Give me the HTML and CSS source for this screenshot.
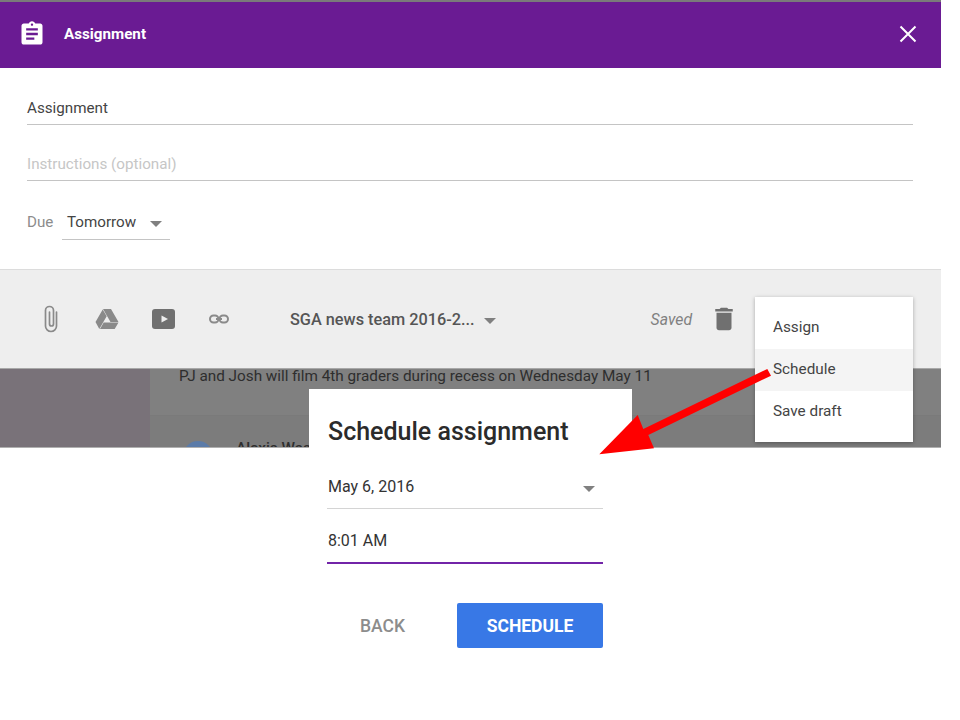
FILE: index.html
```html
<!DOCTYPE html>
<html lang="en">
  <head>
    <meta charset="UTF-8" />
    <title>Assignment</title>
    <link rel="stylesheet" href="styles.css">
  </head>
  <body>
    <div class="page">
      <div class="top-strip"></div>
      <header class="title-bar">
        <svg class="title-icon" viewBox="0 0 24 24" width="28" height="28">
          <path fill="#fff" d="M19 3h-4.180C14.400 1.840 13.300 1 12 1s-2.400.84-2.820 2H5c-1.100 0-2 .9-2 2v14c0 1.100.9 2 2 2h14c1.100 0 2-.9 2-2V5c0-1.100-.9-2-2-2zm-7 0c.55 0 1 .45 1 1s-.45 1-1 1-1-.45-1-1 .45-1 1-1zm2 14H7v-2h7v2zm3-4H7v-2h10v2zm0-4H7V7h10v2z"/>
        </svg>
        <span class="title-text">Assignment</span>
        <svg class="close-icon" viewBox="0 0 18 18" width="18" height="18">
          <path d="M1.500 1.500l15 15M16.500 1.500l-15 15" stroke="#fff" stroke-width="2"/>
        </svg>
      </header>

      <section class="form">
        <div class="field field-title">Assignment</div>
        <div class="field field-hint">Instructions (optional)</div>
        <div class="due-row">
          <span class="due-label">Due</span>
          <div class="due-select">
            <span>Tomorrow</span>
            <span class="caret"></span>
          </div>
        </div>
      </section>

      <section class="toolbar">
        <div class="attach-icons">
          <svg class="clip-icon" viewBox="0 0 32 32" width="32" height="32">
            <path fill="none" stroke="#8a8a8a" stroke-width="1.700" stroke-linecap="round" d="M21.500 9V23a5.500 5.500 0 0 1-11 0V7.500a4 4 0 0 1 8 0V21a2 2 0 0 1-4 0V9"/>
          </svg>
          <svg viewBox="0 0 24 24" width="24" height="24">
            <path fill="#8a8a8a" d="M8 2h8l7.500 13h-8zM7.700 2.600l4 6.600-7.400 12.800-3.800-7zM8.700 15.600h14.800l-3.800 6.400H5z"/>
          </svg>
          <svg viewBox="0 0 24 24" width="24" height="24">
            <rect x="1" y="2" width="23" height="20" rx="3" fill="#707070"/>
            <path fill="#eeeeee" d="M10.500 8.500v7l6.500-3.500z"/>
          </svg>
          <svg viewBox="0 0 24 24" width="24" height="24">
            <g fill="none" stroke="#8a8a8a" stroke-width="2">
              <rect x="3" y="8.500" width="8.500" height="7" rx="3.500"/>
              <rect x="12.500" y="8.500" width="8.500" height="7" rx="3.500"/>
              <path d="M9 12h6"/>
            </g>
          </svg>
        </div>
        <div class="class-select">
          <span>SGA news team 2016-2...</span>
          <span class="caret"></span>
        </div>
        <span class="saved">Saved</span>
        <svg class="trash" viewBox="0 0 24 24" width="30" height="30">
          <path fill="#707070" d="M6 19c0 1.100.9 2 2 2h8c1.100 0 2-.9 2-2V7H6v12zM19 4h-3.500l-1-1h-5l-1 1H5v2h14V4z"/>
        </svg>
      </section>

      <section class="backdrop">
        <div class="sidebar"></div>
        <div class="stream">
          <div class="post-text">PJ and Josh will film 4th graders during recess on Wednesday May 11</div>
          <div class="comment">
            <span class="avatar"></span>
            <span class="comment-name">Alexis Was</span>
          </div>
        </div>
      </section>

      <ul class="menu">
        <li>Assign</li>
        <li class="active">Schedule</li>
        <li>Save draft</li>
      </ul>

      <div class="dialog">
        <h2 class="dialog-title">Schedule assignment</h2>
        <div class="dialog-field date-field">
          <span>May 6, 2016</span>
          <span class="caret"></span>
        </div>
        <div class="dialog-field time-field">8:01 AM</div>
        <div class="dialog-actions">
          <button class="btn-back">BACK</button>
          <button class="btn-schedule">SCHEDULE</button>
        </div>
      </div>

      <svg class="pointer" viewBox="0 0 960 720" width="960" height="720">
        <path fill="#ff0000" d="M767.300 369L771 375.700L648.300 435L654 448.300L599.300 454.300L637.700 415L643.300 429z"/>
      </svg>
    </div>
  </body>
</html>
```

FILE: styles.css
```css
* {
    box-sizing: border-box;
}

html, body {
    margin: 0;
    padding: 0;
    height: 100%;
    background-color: #fff;
    overflow: hidden;
}

body {
    font-family: Roboto, "Liberation Sans", sans-serif;
    color: #3c3c3c;
}

.page {
    position: relative;
    width: 941px;
    height: 720px;
}

.top-strip {
    height: 2px;
    background-color: #7a7a7a;
}

.title-bar {
    display: flex;
    align-items: center;
    height: 66px;
    padding: 0 24px 2px 18px;
    background-color: #6a1b93;
    color: #fff;
}

.title-text {
    margin-left: 18px;
    font-size: 15.200px;
    font-weight: 700;
}

.close-icon {
    margin-left: auto;
}

.form {
    height: 201px;
    padding: 28px 28px 0 27px;
    font-size: 15.200px;
}

.field {
    height: 29px;
    border-bottom: 1px solid #c4c4c4;
    line-height: 25px;
}

.field-title {
    margin-bottom: 27px;
    color: #444;
}

.field-hint {
    color: #c6c6c6;
}

.due-row {
    display: flex;
    align-items: flex-start;
    margin-top: 29px;
    color: #8c8c8c;
}

.due-label {
    width: 35px;
    line-height: 24px;
}

.due-select {
    display: flex;
    align-items: center;
    justify-content: space-between;
    width: 108px;
    height: 30px;
    padding: 0 8px 6px 5px;
    border-bottom: 1px solid #c4c4c4;
    color: #444;
}

.caret {
    width: 0;
    height: 0;
    margin-top: 4px;
    border-left: 6.500px solid transparent;
    border-right: 6.500px solid transparent;
    border-top: 6px solid #808080;
}

.toolbar {
    display: flex;
    align-items: center;
    height: 100px;
    padding: 0 0 0 35px;
    background-color: #eeeeee;
    border-top: 1px solid #dcdcdc;
    border-bottom: 1px solid #a8a8a8;
}

.attach-icons {
    display: flex;
    align-items: center;
    gap: 32px;
}

.clip-icon {
    margin-right: -4px;
}

.class-select {
    display: flex;
    align-items: center;
    gap: 9px;
    margin-left: 59px;
    font-size: 16.300px;
    font-weight: 500;
    color: #555;
}

.saved {
    margin-left: 155px;
    font-size: 15.800px;
    font-style: italic;
    color: #808080;
}

.trash {
    margin-left: 17px;
}

.backdrop {
    display: flex;
    height: 79px;
    background-color: #808080;
    border-bottom: 1px solid #b0b0b0;
    overflow: hidden;
}

.sidebar {
    width: 150px;
    background-color: #797279;
}

.stream {
    flex: 1;
    color: #2e2e2e;
}

.post-text {
    height: 47px;
    padding: 0 0 0 29px;
    font-size: 15.300px;
    line-height: 14px;
    border-bottom: 1px solid #7a7a7a;
}

.comment {
    display: flex;
    gap: 23px;
    height: 40px;
    padding: 25px 0 0 33px;
    background-color: #7c7c7c;
}

.avatar {
    flex: none;
    width: 30px;
    height: 30px;
    border-radius: 50%;
    background-color: #5b7ba8;
}

.comment-name {
    margin-top: -2px;
    font-size: 15.300px;
    font-weight: 500;
}

.menu {
    position: absolute;
    left: 755px;
    top: 297px;
    width: 158px;
    margin: 0;
    padding: 10px 0 9px;
    list-style: none;
    background-color: #fff;
    box-shadow: 0 1px 4px rgba(0, 0, 0, 0.3);
    font-size: 15.300px;
    color: #444;
}

.menu li {
    height: 42px;
    padding-left: 18px;
    line-height: 40px;
}

.menu .active {
    background-color: #f4f4f4;
}

.dialog {
    position: absolute;
    left: 309px;
    top: 389px;
    width: 323px;
    height: 280px;
    padding: 29px 28px 0 19px;
    background-color: #fff;
}

.dialog-title {
    margin: 0;
    font-size: 25px;
    line-height: 28px;
    font-weight: 500;
    color: #2b2b2b;
}

.dialog-field {
    width: 276px;
    margin-left: -1px;
    padding-left: 1px;
    font-size: 16px;
    color: #333;
}

.date-field {
    display: flex;
    align-items: center;
    justify-content: space-between;
    height: 63px;
    padding-top: 18px;
    padding-right: 8px;
    border-bottom: 1px solid #d4d4d4;
}

.date-field .caret {
    margin-top: 6px;
}

.time-field {
    height: 55px;
    padding-top: 22px;
    border-bottom: 2px solid #7224a8;
}

.dialog-actions {
    display: flex;
    align-items: center;
    justify-content: flex-end;
    gap: 52px;
    width: 276px;
    margin-top: 39px;
    margin-left: -1px;
}

.dialog-actions button {
    height: 45px;
    padding: 0;
    border: none;
    font-family: inherit;
    font-size: 17.500px;
}

.btn-back {
    background: none;
    font-weight: 500;
    color: #8c8c8c;
}

.btn-schedule {
    width: 146px;
    background-color: #3878e6;
    border-radius: 2px;
    font-weight: 700;
    color: #fff;
}

.pointer {
    position: absolute;
    left: 0;
    top: 0;
    pointer-events: none;
}
```
